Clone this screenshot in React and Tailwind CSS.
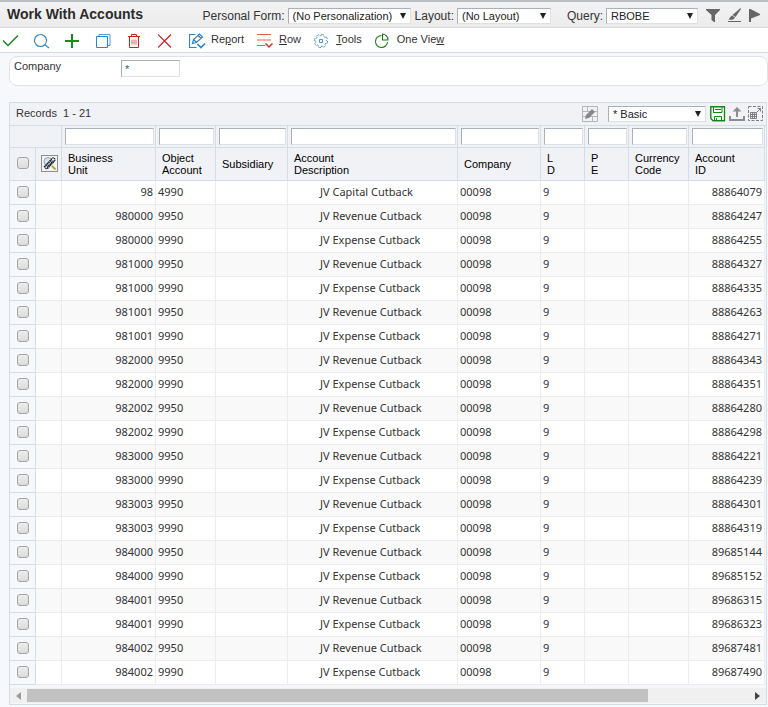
import React, { useState } from "react";

const actions = [
  { name: "Select", icon: <path d="M0 8.500l5 5L15 3.500" stroke="#1a7f1a" strokeWidth="1.400" /> },
  {
    name: "Find",
    icon: (
      <g stroke="#2b84cf" strokeWidth="1.100">
        <circle cx="6.500" cy="8.500" r="6" />
        <path d="M10.800 12.800l4.200 3.200" />
      </g>
    ),
  },
  { name: "Add", icon: <path d="M0 9h14M7 2v14" stroke="#1a8a1a" strokeWidth="2" /> },
  {
    name: "Copy",
    icon: (
      <g stroke="#2b84cf">
        <path d="M.500 4.500h11v11H.500z" />
        <path d="M3 4V2.500h11v11h-2" opacity=".8" />
      </g>
    ),
  },
  {
    name: "Delete",
    icon: (
      <g stroke="#d02020">
        <path d="M1 4.500h12M4.500 4V2.500h5V4M2.500 5v10.500h9V5" />
        <path d="M5 7.500v5M7 7.500v5M9 7.500v5" opacity=".7" />
      </g>
    ),
  },
  { name: "Close", icon: <path d="M0 2.500l13 13M13 2.500l-13 13" stroke="#d81e1e" strokeWidth="1.200" /> },
];

const menus = [
  {
    before: "Re", key: "p", after: "ort",
    icon: (
      <g stroke="#2b84cf" strokeWidth="1.200">
        <path d="M6.500 2.500H.500v13h7" />
        <path d="M3.500 11.500l1-4 6-5.500 3 3-6 5.500zM9 3.500l3 3M4.500 7.500l3 3" />
        <path d="M8.500 12l3.500 3.500 4-4" strokeWidth="1.600" />
      </g>
    ),
  },
  {
    before: "", key: "R", after: "ow",
    icon: (
      <g stroke="#e8604c">
        <path d="M0 2.500h14M0 8h14M0 13.500h8" />
        <path d="M8.500 11.500l3.500 3.500 3.500-3.500" stroke="#e02c1c" strokeWidth="1.500" />
      </g>
    ),
  },
  {
    before: "", key: "T", after: "ools",
    icon: (
      <g stroke="#4795d4">
        <circle cx="7" cy="9" r="6.600" strokeDasharray="2.800 2.384" />
        <circle cx="7" cy="9" r="5.400" strokeDasharray="2.100 2.142" strokeDashoffset="-2.100" />
        <path d="M5.500 7.500h3v3h-3z" />
      </g>
    ),
  },
  {
    before: "One Vie", key: "w", after: "",
    icon: (
      <g stroke="#1a7f1a" strokeWidth="1.100">
        <path d="M6.500 3.500A6 6 0 1 0 12.500 10" />
        <path d="M7.500 8V2A6 6 0 0 1 13 8z" />
      </g>
    ),
  },
];

const columns = [
  { lines: ["Business", "Unit"] },
  { lines: ["Object", "Account"] },
  { lines: ["Subsidiary"] },
  { lines: ["Account", "Description"] },
  { lines: ["Company"] },
  { lines: ["L", "D"] },
  { lines: ["P", "E"] },
  { lines: ["Currency", "Code"] },
  { lines: ["Account", "ID"] },
];

const accounts = [
  { unit: "98", object: "4990", description: "JV Capital Cutback", id: "88864079" },
  { unit: "980000", object: "9950", description: "JV Revenue Cutback", id: "88864247" },
  { unit: "980000", object: "9990", description: "JV Expense Cutback", id: "88864255" },
  { unit: "981000", object: "9950", description: "JV Revenue Cutback", id: "88864327" },
  { unit: "981000", object: "9990", description: "JV Expense Cutback", id: "88864335" },
  { unit: "981001", object: "9950", description: "JV Revenue Cutback", id: "88864263" },
  { unit: "981001", object: "9990", description: "JV Expense Cutback", id: "88864271" },
  { unit: "982000", object: "9950", description: "JV Revenue Cutback", id: "88864343" },
  { unit: "982000", object: "9990", description: "JV Expense Cutback", id: "88864351" },
  { unit: "982002", object: "9950", description: "JV Revenue Cutback", id: "88864280" },
  { unit: "982002", object: "9990", description: "JV Expense Cutback", id: "88864298" },
  { unit: "983000", object: "9950", description: "JV Revenue Cutback", id: "88864221" },
  { unit: "983000", object: "9990", description: "JV Expense Cutback", id: "88864239" },
  { unit: "983003", object: "9950", description: "JV Revenue Cutback", id: "88864301" },
  { unit: "983003", object: "9990", description: "JV Expense Cutback", id: "88864319" },
  { unit: "984000", object: "9950", description: "JV Revenue Cutback", id: "89685144" },
  { unit: "984000", object: "9990", description: "JV Expense Cutback", id: "89685152" },
  { unit: "984001", object: "9950", description: "JV Revenue Cutback", id: "89686315" },
  { unit: "984001", object: "9990", description: "JV Expense Cutback", id: "89686323" },
  { unit: "984002", object: "9950", description: "JV Revenue Cutback", id: "89687481" },
  { unit: "984002", object: "9990", description: "JV Expense Cutback", id: "89687490" },
];

const inset = "border border-t-[#a9b0b8] border-l-[#a9b0b8] border-r-[#dde1e6] border-b-[#dde1e6] bg-white";

const Select = ({ label, option, width }) => (
  <span className={`relative block ${width}`}>
    <select
      aria-label={label}
      className={`block w-full h-4 appearance-none pl-1 text-[11px] leading-[14px] text-[#222] ${inset}`}
    >
      <option>{option}</option>
    </select>
    <svg className="absolute right-1 top-1 pointer-events-none" width="8" height="8" viewBox="0 0 8 8">
      <path d="M1 1h6L4 7z" fill="#222" />
    </svg>
  </span>
);

const LabeledSelect = ({ label, option, width }) => (
  <div className="flex items-center gap-[3px]">
    <span className="text-xs text-[#333]">{label}:</span>
    <Select label={label} option={option} width={width} />
  </div>
);

const Check = ({ label, checked, onChange }) => (
  <input
    type="checkbox"
    aria-label={label}
    checked={checked}
    onChange={onChange}
    className="block mx-auto w-3 h-3 appearance-none rounded-[3px] border border-[#a3a3a3] bg-linear-to-b from-[#ededed] to-[#dcdcdc] checked:bg-[#2b84cf]"
  />
);

const TitleBar = () => (
  <header className="flex items-center h-7 pl-[7px] pr-[5px] border-t-2 border-t-[#b9bdc0] border-b border-b-[#d6d9dc] bg-linear-to-b from-[#f3f3f3] to-[#ebebeb]">
    <h1 className="flex-1 pb-[2px] text-sm font-bold text-[#2b2b2b] whitespace-nowrap">Work With Accounts</h1>
    <div className="flex items-center mt-[2px]">
      <LabeledSelect label="Personal Form" option="(No Personalization)" width="w-[123px]" />
      <div className="ml-1">
        <LabeledSelect label="Layout" option="(No Layout)" width="w-[94px]" />
      </div>
      <div className="ml-4">
        <LabeledSelect label="Query" option="RBOBE" width="w-[92px]" />
      </div>
      <div className="flex ml-2 gap-[6px] text-[#666]">
        <button type="button" aria-label="Filter">
          <svg width="15" height="15" viewBox="0 0 15 15" fill="currentColor">
            <path d="M0 1h14v1L9 7v7H8L5.500 12V7L0 2z" />
          </svg>
        </button>
        <button type="button" aria-label="Edit query">
          <svg width="15" height="15" viewBox="0 0 15 15" fill="currentColor">
            <path d="M13.500 0L14 1 8.500 9 5.500 7zM5 7.500L8 9.500C7 12 4 12 1.500 11.500 3 10.500 3 8.500 5 7.500z" />
            <path d="M1 13h13v1H1z" />
          </svg>
        </button>
        <button type="button" aria-label="Flag">
          <svg width="15" height="15" viewBox="0 0 15 15" fill="currentColor">
            <path d="M1 1h1.500l9.500 5v1L3 10.500V14H1z" />
          </svg>
        </button>
      </div>
    </div>
  </header>
);

const Toolbar = () => (
  <nav className="flex items-center h-[25px] pl-[3px] pt-[2px] border-b border-[#d3dbe3] bg-white text-[11px] text-[#333]">
    <div className="flex gap-[15px]">
      {actions.map((action) => (
        <button key={action.name} type="button" aria-label={action.name}>
          <svg width="16" height="18" viewBox="0 0 16 18" fill="none">{action.icon}</svg>
        </button>
      ))}
    </div>
    <div className="flex ml-[15px] gap-[13px]">
      {menus.map((menu) => (
        <button key={menu.key} type="button" className="flex items-center gap-1">
          <svg width="18" height="18" viewBox="0 0 18 18" fill="none">{menu.icon}</svg>
          <span className="leading-4 pb-1">
            {menu.before}
            <span className="underline">{menu.key}</span>
            {menu.after}
          </span>
        </button>
      ))}
    </div>
  </nav>
);

const GridHeader = () => (
  <div className="flex items-center h-[23px] pl-[6px] pr-[2px] border-b border-[#d3dde6] bg-[#f1f2f6]">
    <span className="flex-1 pb-[2px] text-[11px] text-[#333] whitespace-pre">Records  1 - 21</span>
    <button type="button" aria-label="Customize grid" className="mr-[10px]">
      <svg width="16" height="16" viewBox="0 0 16 16" fill="none">
        <path d="M.500.500h15v15H.500zM0 5.500h16M0 10.500h16M5.500 0v5M10.500 10v6" stroke="#b3b5b8" />
        <path d="M3 13l1-4 6-6 3 3-6 6z" fill="#85878a" />
      </svg>
    </button>
    <Select label="Grid format" option="* Basic" width="w-[98px]" />
    <div className="flex ml-1 gap-[3px]">
      <button type="button" aria-label="Save grid format" className="bg-white">
        <svg width="16" height="16" viewBox="0 0 16 16" fill="none" stroke="#158515">
          <path d="M.800.800h13.700v14H3L.800 12.500z" strokeWidth="1.400" />
          <path d="M3.500 1v5.500h8.500V1M5 3.500h6M4.500 14.500v-4h7v4M6.500 12v2" />
        </svg>
      </button>
      <button type="button" aria-label="Export">
        <svg width="16" height="16" viewBox="0 0 16 16" fill="#8b8d90">
          <path d="M8 1l4.500 4.500H9V11H7V5.500H3.500z" />
          <path d="M0 10h2v3h12v-3h2v5H0z" />
        </svg>
      </button>
      <button type="button" aria-label="Maximize grid">
        <svg width="16" height="16" viewBox="0 0 16 16" fill="none" stroke="#7b7d80">
          <path d="M.500.500h14v14H.500z" strokeDasharray="3 1.500" />
          <path d="M2.500 6.500h6v6h-6zM2 8.500h7M2 10.500h7M4.500 6v7M6.500 6v7" />
          <path d="M9 6l3.500-3.500M9.500 2.500h3v3" />
        </svg>
      </button>
    </div>
  </div>
);

const headCell = "border-r border-b border-[#d3dde6]";
const bodyCell = "border-r border-b border-[#ececec] px-[2px] pb-px";

const AccountsTable = () => {
  const [selected, setSelected] = useState([]);
  const allSelected = selected.length === accounts.length;

  const toggleRow = (id) => {
    setSelected(selected.includes(id) ? selected.filter((item) => item !== id) : [...selected, id]);
  };

  const toggleAll = () => {
    setSelected(allSelected ? [] : accounts.map((account) => account.id));
  };

  return (
    <table className="w-full table-fixed border-separate border-spacing-0">
      <colgroup>
        <col className="w-[26px]" />
        <col className="w-[26px]" />
        <col className="w-[94px]" />
        <col className="w-[60px]" />
        <col className="w-[72px]" />
        <col />
        <col className="w-[83px]" />
        <col className="w-[44px]" />
        <col className="w-[44px]" />
        <col className="w-[60px]" />
        <col className="w-[76px]" />
      </colgroup>
      <thead className="bg-[#f1f2f6] text-[11px] leading-3 text-black">
        <tr className="h-[22px]">
          <td colSpan="2" className={headCell}></td>
          {columns.map((column, index) => (
            <td key={index} className={`pl-[3px] pr-px ${headCell}`}>
              <input
                type="text"
                aria-label={`Filter ${column.lines.join(" ")}`}
                className={`block w-full h-[17px] px-1 ${inset}`}
              />
            </td>
          ))}
        </tr>
        <tr className="h-[33px]">
          <th className={`pb-[2px] ${headCell}`}>
            <Check label="Select all rows" checked={allSelected} onChange={toggleAll} />
          </th>
          <th className={`pl-[2px] pb-px ${headCell}`}>
            <button type="button" aria-label="Attachments" className="block mx-auto border border-[#8e8e8e] bg-[#f4f4f4]">
              <svg width="15" height="15" viewBox="0 0 15 15" fill="none">
                <circle cx="6" cy="5.500" r="4" fill="#d3e6f5" stroke="#8fa5b5" />
                <path d="M10 10l3.500 3.500" stroke="#b5a23c" strokeWidth="2" />
                <path
                  d="M2 11l8-8.500c1.500-1.500 4 .500 2.500 2.500l-6.500 7c-1.500 1.500-4 0-2.500-2l6-6M5 11.500l6.500-7"
                  stroke="#1a1a1a"
                  strokeWidth="1.200"
                  strokeDasharray="1.500 .500"
                />
              </svg>
            </button>
          </th>
          {columns.map((column, index) => (
            <th key={index} className={`pl-[6px] text-left font-normal ${headCell}`}>
              {column.lines.map((line) => (
                <span key={line} className="block">{line}</span>
              ))}
            </th>
          ))}
        </tr>
      </thead>
      <tbody className="font-['Noto_Sans',sans-serif] text-[11px] leading-4 text-[#333] whitespace-nowrap">
        {accounts.map((account) => (
          <tr key={account.id} className="h-6 bg-white even:bg-[#f9f9f9]">
            <td className="pb-px border-r border-b border-[#d3dde6] bg-[#f6f8fb]">
              <Check
                label={`Select account ${account.id}`}
                checked={selected.includes(account.id)}
                onChange={() => toggleRow(account.id)}
              />
            </td>
            <td className={bodyCell}></td>
            <td className={`text-right ${bodyCell}`}>{account.unit}</td>
            <td className={bodyCell}>{account.object}</td>
            <td className={bodyCell}></td>
            <td className={bodyCell}>
              <span className="pl-[30px]">{account.description}</span>
            </td>
            <td className={bodyCell}>00098</td>
            <td className={bodyCell}>9</td>
            <td className={bodyCell}></td>
            <td className={bodyCell}></td>
            <td className={`text-right ${bodyCell}`}>{account.id}</td>
          </tr>
        ))}
      </tbody>
    </table>
  );
};

const GridScrollbar = () => (
  <div className="flex items-center h-[15px] mt-[3px] mb-px bg-[#f0f0f0]">
    <button type="button" aria-label="Scroll left" className="w-[17px] flex justify-center">
      <svg width="5" height="8" viewBox="0 0 5 8"><path d="M5 0v8L0 4z" fill="#9a9a9a" /></svg>
    </button>
    <div className="flex-1">
      <div className="w-[86%] h-[13px] bg-[#c1c1c1]"></div>
    </div>
    <button type="button" aria-label="Scroll right" className="w-[17px] flex justify-center">
      <svg width="5" height="8" viewBox="0 0 5 8"><path d="M0 0v8l5-4z" fill="#444" /></svg>
    </button>
  </div>
);

const App = () => {
  const [company, setCompany] = useState("*");

  return (
    <div className="min-h-screen bg-[#f7f8fb] font-['Liberation_Sans',Arial,sans-serif]">
      <TitleBar />
      <Toolbar />
      <main className="pl-[9px] pt-[3px]">
        <section className="flex items-start h-[30px] pl-1 pt-[3px] rounded-lg border border-[#dfe2e7] bg-white text-[11px] text-[#333]">
          <label htmlFor="company" className="w-[107px] leading-3">Company</label>
          <input
            id="company"
            type="text"
            value={company}
            onChange={(e) => setCompany(e.target.value)}
            className={`w-[59px] h-[17px] px-[3px] text-[#2a5a80] ${inset}`}
          />
        </section>
        <section className="mt-4 mr-px border border-[#d3dde6] bg-[#f6f7fa]">
          <GridHeader />
          <div className="pr-px">
            <AccountsTable />
          </div>
          <GridScrollbar />
        </section>
      </main>
    </div>
  );
};

export default App;
